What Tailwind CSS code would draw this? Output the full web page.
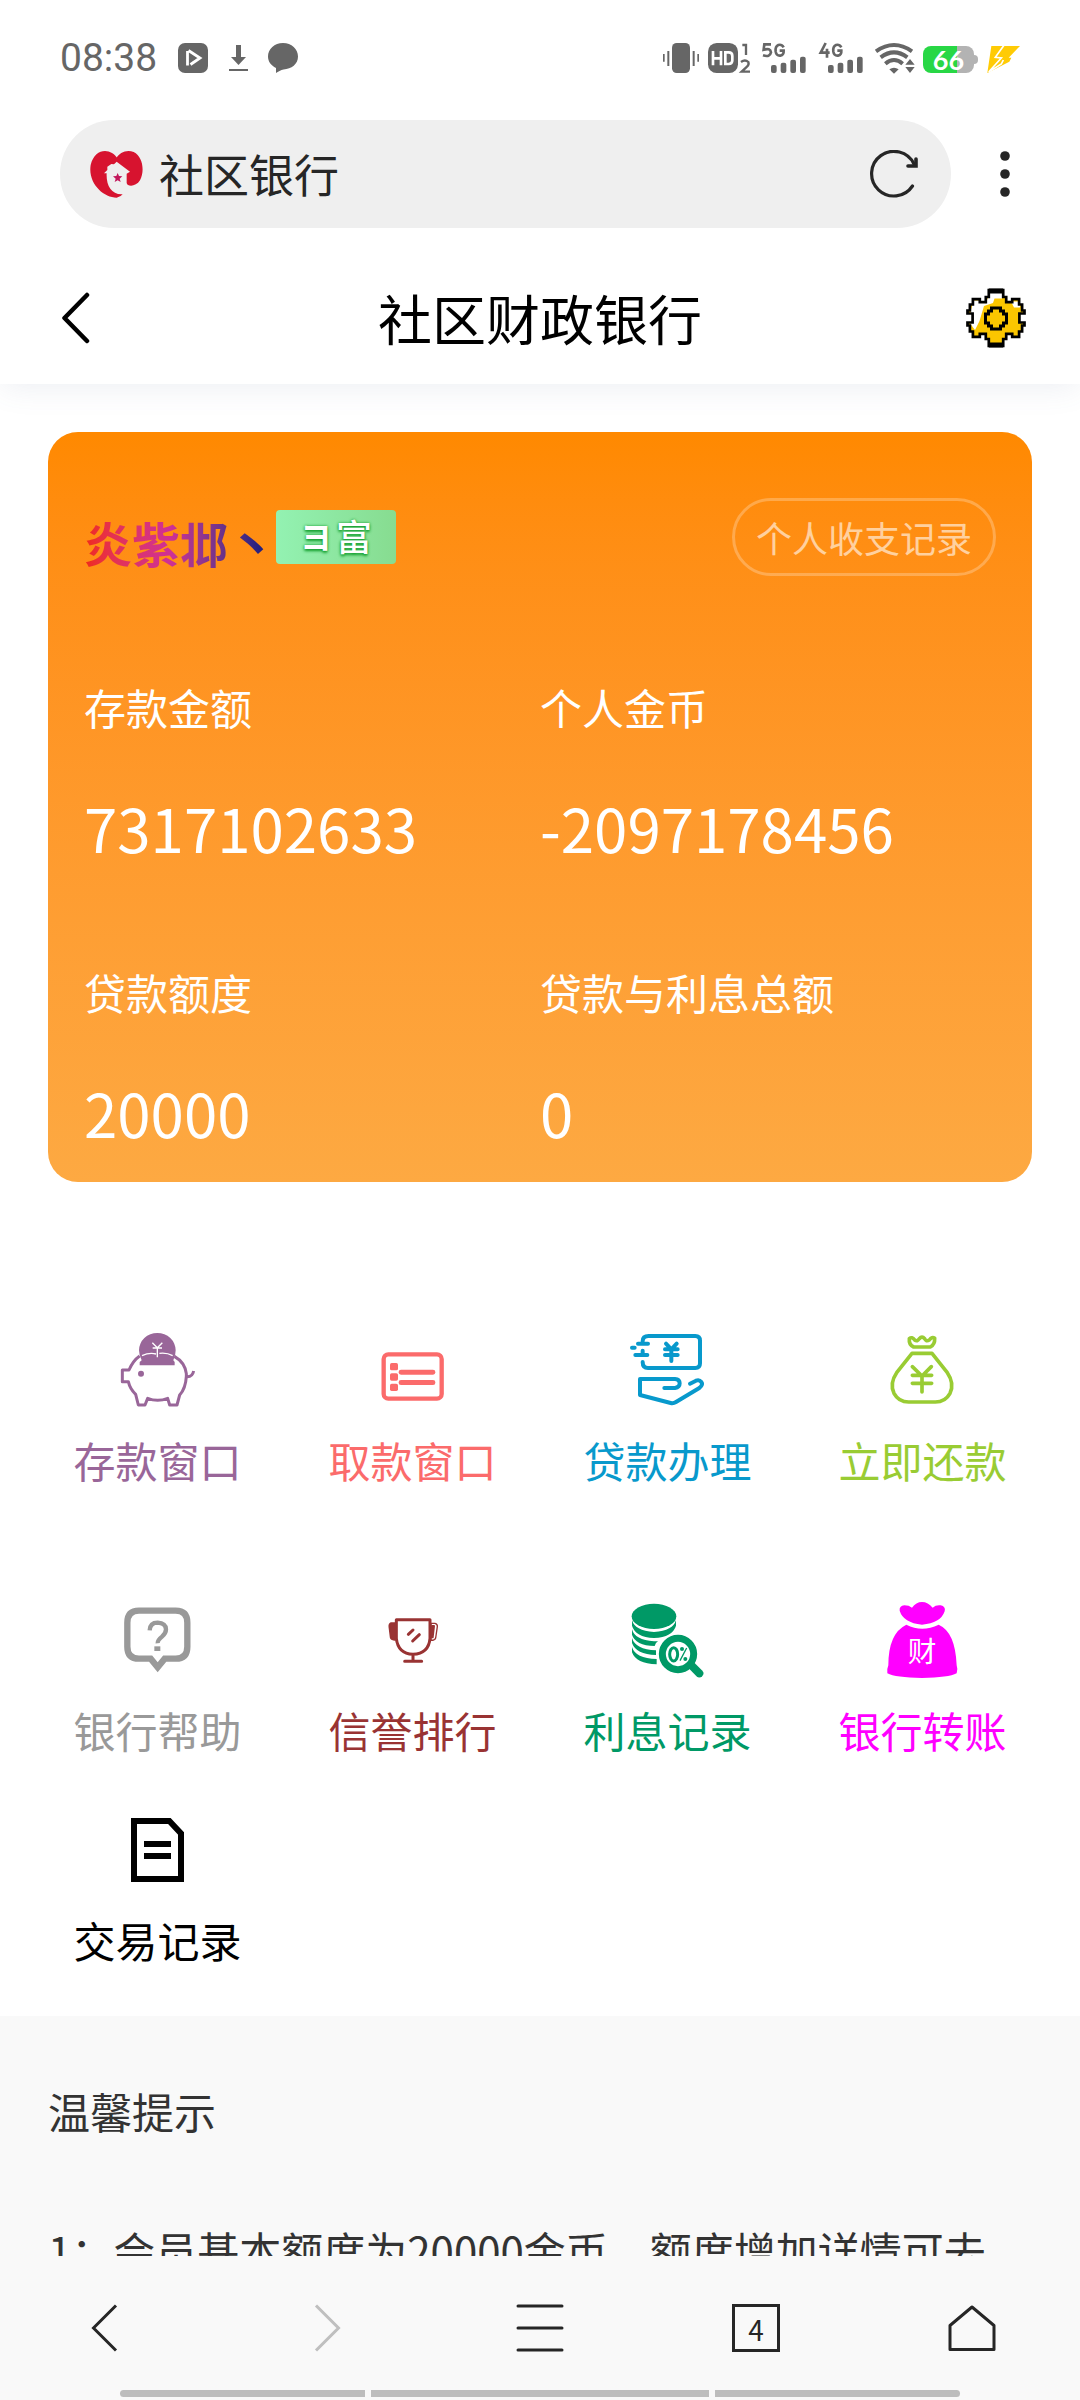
<!DOCTYPE html>
<html lang="zh-CN">
<head>
<meta charset="utf-8">
<meta name="viewport" content="width=device-width, initial-scale=1">
<title>社区财政银行</title>
<script src="https://cdn.jsdelivr.net/npm/@tailwindcss/browser@4"></script>
</head>
<body class="flex h-screen flex-col bg-white font-['Noto_Sans_CJK_SC',sans-serif] text-black">

<header class="relative z-10 shrink-0 bg-white shadow-[0_4px_30px_-2px_rgba(90,105,150,0.12)]">
  <!-- Status bar -->
  <div class="flex h-[120px] items-center justify-between px-[60px] pb-1 text-[#666]">
    <div class="flex items-center">
      <span class="w-[118px] font-['Roboto',sans-serif] text-[39px] leading-[44px]">08:38</span>
      <svg class="h-[30px] w-[30px]" viewBox="0 0 30 30" fill="none"><rect width="30" height="30" rx="7" fill="currentColor"/><path d="M9.500 8v14.500M10.500 7.500L22 15 12.500 21.500" stroke="#fff" stroke-width="2.800"/><path d="M12 11l6 4.200-6 4z" fill="currentColor"/></svg>
      <svg class="ml-[21px] h-[28px] w-[19px]" viewBox="0 0 19 28" fill="currentColor"><path d="M7 1h5v12h5l-7.500 8L2 13h5zM0 25h19v2H0z"/></svg>
      <svg class="ml-5 h-[30px] w-[30px]" viewBox="0 0 30 30" fill="currentColor"><path d="M15 0c8.500 0 15 6 15 13.500S23.500 26 15.500 26.500C13 27 10 28.500 8 30v-5C3 22.500 0 18.500 0 13.500 0 6 6.500 0 15 0z"/></svg>
    </div>
    <div class="flex items-center gap-2">
      <svg class="h-8 w-[39px]" viewBox="63 66 117 96" fill="currentColor"><rect x="96" y="69" width="54" height="90" rx="14"/><path d="M69 102h5v23h-5zM82 93h6v45h-6zM158 93h6v45h-6zM172 102h5v23h-5z"/></svg>
      <svg class="h-8 w-[46px]" viewBox="204 66 138 96" fill="currentColor"><rect x="204" y="69" width="90" height="90" rx="26"/><path d="M219 93v43M243 93v43M219 115h24M256 97h10q11 0 11 11v13q0 11-11 11h-10z" fill="none" stroke="#fff" stroke-width="8"/><path d="M307 75h11v30M303 126q12-9 22 0q3 8-4 14l-16 15h25" fill="none" stroke="currentColor" stroke-width="7"/></svg>
      <svg class="h-8 w-[46px]" viewBox="366 66 138 96" fill="currentColor"><path d="M393 73h-20l-2 16q20-6 22 8q-3 16-24 9M431 82q-6-10-16-7q-10 4-8 20q2 13 14 12q11-2 10-15h-12" fill="none" stroke="currentColor" stroke-width="8"/><rect x="393" y="135" width="17" height="24" rx="6"/><rect x="422" y="128" width="17" height="31" rx="6"/><rect x="451" y="119" width="17" height="40" rx="6"/><rect x="480" y="110" width="17" height="49" rx="6"/></svg>
      <svg class="h-8 w-[50px]" viewBox="528 66 150 96" fill="currentColor"><path d="M557 69l-15 29h27M561 86v27M604 82q-6-10-16-7q-10 4-8 20q2 13 14 12q11-2 10-15h-12" fill="none" stroke="currentColor" stroke-width="8"/><rect x="564" y="135" width="17" height="24" rx="6"/><rect x="593" y="128" width="17" height="31" rx="6"/><rect x="622" y="119" width="17" height="40" rx="6"/><rect x="651" y="110" width="17" height="49" rx="6"/></svg>
      <svg class="h-8 w-[41px]" viewBox="702 66 123 96"><g fill="none" stroke="currentColor" stroke-width="12"><path d="M708 94q54-38 108 0M722 112q40-30 80 0M736 131q26-22 52 0"/></g><path d="M748 148q14-10 28 0l-14 13zM796 134l14-17 14 17zM796 141h28l-14 18z" fill="currentColor"/></svg>
      <span class="flex items-center pt-[2px]">
        <span class="flex h-[27px] w-[51px] items-center justify-center rounded-lg bg-linear-to-r from-[#28d745] from-66% to-[#b3b3b3] to-66% font-['Lato',sans-serif] text-[27px] leading-[27px] font-bold text-white">66</span>
        <span class="h-[9px] w-1 rounded-r bg-[#b3b3b3]"></span>
      </span>
      <svg class="h-8 w-[34px]" viewBox="1038 66 102 96"><path d="M1054 78h86l-34 35h8l-6 12-66 34z" fill="#ffcb05"/><path d="M1092 76l-26 36 18 2-38 42M1046 156l38-24 6-12" fill="none" stroke="#fff" stroke-width="5"/></svg>
    </div>
  </div>

  <!-- Address bar -->
  <div class="flex h-[108px] items-stretch pr-[21px] pl-[60px]">
    <div class="flex min-w-0 flex-1 items-center rounded-full bg-[#efefef] pr-[33px] pl-[30px]">
      <svg class="h-12 w-[54px] shrink-0" viewBox="270 455 162 144"><path d="M352 480C335 450 285 445 272 500c-9 55 38 98 78 98q12-2 18-10c-34 2-50-28-48-63h-8l10-10v-10l12-8 8 1 8-8 40 30-10 6v28c2 12 28 12 40-8 14-26 10-70-19-85-20-9-43 1-53 20z" fill="#d7132f"/><path d="M353 524l4 9 10 1-8 7 3 10-9-5-9 5 3-10-8-7 10-1z" fill="#c2185b"/></svg>
      <span class="ml-[15px] min-w-0 flex-1 truncate text-[45px] leading-[66px] text-[#262626]">社区银行</span>
      <button type="button" aria-label="刷新" class="flex h-12 w-12 items-center justify-center text-[#262626]">
        <svg class="h-12 w-12" viewBox="0 0 48 48" fill="none" stroke="currentColor" stroke-width="3.200" stroke-linecap="round"><path d="M42.500 36A22.300 22.300 0 1 1 44 14"/><path d="M46 9v7h-8" stroke-width="3.600"/></svg>
      </button>
    </div>
    <button type="button" aria-label="更多" class="flex w-[108px] items-center justify-center text-[#262626]">
      <svg class="h-12 w-3" viewBox="0 0 12 48" fill="currentColor"><circle cx="6" cy="6" r="4.800"/><circle cx="6" cy="24" r="4.800"/><circle cx="6" cy="42" r="4.800"/></svg>
    </button>
  </div>

  <!-- Page title -->
  <div class="mt-6 grid h-[132px] grid-cols-[60px_1fr_60px] items-center px-[54px]">
    <a href="#" aria-label="返回" class="flex h-[60px] items-center pl-2">
      <svg class="h-[54px] w-[30px]" viewBox="0 0 30 54" fill="none" stroke="currentColor" stroke-width="4.500" stroke-linecap="round" stroke-linejoin="round"><path d="M25 4L2.500 27 25 50"/></svg>
    </a>
    <h1 class="text-center text-[54px] leading-[78px]">社区财政银行</h1>
    <a href="#" aria-label="设置" class="block">
      <svg class="h-[60px] w-[60px]" viewBox="0 0 20 20"><path d="M7.600.7h4.800V3h1v1.700h2V3.700h2.300v1.800h1v2h.8v1h-1.700v3h1.700v1h-.8v2h-1v1.800h-2.300v-1h-2V17h-1v2.300H7.600V17h-1v-1.700h-2v1H2.300v-1.800h-1v-2H.5v-1h1.700v-3H.5v-1h.8v-2h1V3.700h2.300v1h2V3h1z" fill="#fbc600"/><path d="M2.500 4.200h2l2 1 1.500-3.500h4v1.800H9.500L9 5l-3 1-1.500 5L3 14l-1.500-2V8zM15 4.500h3v2h-2z" fill="#fff"/><path d="M7.600.7h4.800V3h1v1.700h2V3.700h2.300v1.800h1v2h.8v1h-1.700v3h1.700v1h-.8v2h-1v1.800h-2.300v-1h-2V17h-1v2.300H7.600V17h-1v-1.700h-2v1H2.300v-1.800h-1v-2H.5v-1h1.700v-3H.5v-1h.8v-2h1V3.700h2.300v1h2V3h1z" fill="none" stroke="#000" stroke-width=".900"/><path d="M7.600.2h4.800v1.600H7.600zM7.600 18.200h4.800v1.600H7.600z"/><path d="M8.500 6.700h3v1h1v1h1v3h-1v1h-1v1h-3v-1h-1v-1h-1v-3h1v-1h1z" fill="#fbc600" stroke="#000" stroke-width="1"/></svg>
    </a>
  </div>
</header>

<main class="flex min-h-0 flex-1 flex-col overflow-y-auto pt-12 [scrollbar-width:none]">
  <!-- Account card -->
  <section class="mx-12 shrink-0 rounded-[30px] bg-linear-to-b from-[#ff8900] to-[#fda942] px-9 pt-[66px] pb-[25px] text-white">
    <div class="flex h-[78px] items-center justify-between">
      <div class="flex items-center">
        <span class="mt-[10px] bg-linear-to-r from-[#f02a10] via-[#cf2f95] via-45% to-[#00107a] bg-clip-text text-[48px] leading-[64px] font-bold text-transparent">炎紫邶丶</span>
        <span class="flex h-[54px] w-[120px] items-center justify-center gap-1 rounded bg-linear-to-r from-[#93f2b2] to-[#87dc90] pb-1 leading-[50px] font-bold text-white [text-shadow:0_0_3px_#16a030,0_2px_3px_#16a030]"><span class="text-[32px]">ヨ</span><span class="text-[36px] font-medium">富</span></span>
      </div>
      <a href="#" class="flex h-[78px] items-center rounded-full border-3 border-white/25 px-[21px] text-[36px] leading-[54px] text-white/60">个人收支记录</a>
    </div>
    <dl class="mt-[101px] grid grid-cols-2 gap-y-[90px]">
      <div><dt class="text-[42px] leading-[60px]">存款金额</dt><dd class="mt-[45px] text-[60px] leading-[90px]">7317102633</dd></div>
      <div><dt class="text-[42px] leading-[60px]">个人金币</dt><dd class="mt-[45px] text-[60px] leading-[90px]">-2097178456</dd></div>
      <div><dt class="text-[42px] leading-[60px]">贷款额度</dt><dd class="mt-[45px] text-[60px] leading-[90px]">20000</dd></div>
      <div><dt class="text-[42px] leading-[60px]">贷款与利息总额</dt><dd class="mt-[45px] text-[60px] leading-[90px]">0</dd></div>
    </dl>
  </section>

  <!-- Services -->
  <nav aria-label="银行服务" class="mt-[143px] shrink-0 px-[30px] pb-[46px] text-[42px] leading-[60px]">
    <div class="grid grid-cols-4 gap-y-[105px]">
      <a href="#" class="flex flex-col items-center gap-[15px] text-[#996699]">
        <svg class="h-[90px] w-[90px]" viewBox="159 75 270 270" fill="none" stroke="currentColor" stroke-width="9" stroke-linejoin="round"><path d="M239 168q-20 14-32 42h-20v35h18q5 22 22 38l8 32h20l8-20q30 12 60 0l6 20h22l8-30q18-20 20-56v-8q-4-34-36-52M379 230q18 2 22-17"/><path d="M239 196v-10l6-5q-8-16-8-30a55 52 0 0 1 110 0q0 16-7 30l4 5v10z" fill="currentColor" stroke="none"/><circle cx="243" cy="221" r="9" fill="currentColor" stroke="none"/><path d="M277 128l15 15 15-15M278 144h28M292 144v28M246 167q22-10 42-5M338 167q-18-10-40-7" stroke="#fff" stroke-width="4"/></svg>
        <span>存款窗口</span>
      </a>
      <a href="#" class="flex flex-col items-center gap-[15px] text-[#fb6b6b]">
        <svg class="h-[90px] w-[90px]" viewBox="924 75 270 270" fill="currentColor"><rect x="971" y="163" width="174" height="133" rx="14" fill="none" stroke="currentColor" stroke-width="13"/><rect x="990" y="189" width="24" height="22" rx="5"/><rect x="990" y="220" width="24" height="22" rx="5"/><rect x="990" y="251" width="24" height="22" rx="5"/><rect x="1016" y="209" width="110" height="15" rx="7"/><rect x="1016" y="240" width="110" height="15" rx="7"/></svg>
        <span>取款窗口</span>
      </a>
      <a href="#" class="flex flex-col items-center gap-[15px] text-[#0899cc]">
        <svg class="h-[90px] w-[90px]" viewBox="189 75 270 270" fill="none" stroke="currentColor" stroke-width="12" stroke-linecap="round" stroke-linejoin="round"><path d="M248 124q0-16 18-16h140q14 0 14 14v68q0 14-14 14H264q-16 0-16-18M234 131h30M216 143h8M248 152v12M226 165h36M318 131l16 17 16-17M315 148h38M315 165h38M334 150v33M313 264h32q14-2 14-14q0-12-14-13H240v48l92 24q8 2 16-3l70-42q12-10 6-18q-6-8-16-4l-18 9"/></svg>
        <span>贷款办理</span>
      </a>
      <a href="#" class="flex flex-col items-center gap-[15px] text-[#99cc33]">
        <svg class="h-[90px] w-[90px]" viewBox="955 75 270 270" fill="none" stroke="currentColor" stroke-width="11" stroke-linecap="round" stroke-linejoin="round"><path d="M1062 141h50q14-8 13-26q-8-6-16 5q-10 6-14-4q-8-9-16 0q-6 10-14 4q-8-11-16-4q-2 18 13 25zM1057 160h60l46 58q22 32 8 62q-14 26-44 26h-80q-30 0-44-26q-14-30 8-62zM1058 200l29 28 28-28M1058 226h58M1058 250h58M1087 228v48"/></svg>
        <span>立即还款</span>
      </a>
      <a href="#" class="flex flex-col items-center gap-[15px] text-[#999]">
        <svg class="h-[90px] w-[90px]" viewBox="159 75 270 270" fill="none" stroke="currentColor" stroke-width="19"><path d="M237 122h110q35 0 35 36v72q0 36-35 36h-33l-21 26-21-26h-35q-35 0-35-36v-72q0-36 35-36z"/><path d="M269 181q1-23 24-23q24 1 25 20q0 12-12 22q-14 11-13 20" stroke-width="13"/><path d="M283 229h18v14h-18z" fill="currentColor" stroke="none"/></svg>
        <span>银行帮助</span>
      </a>
      <a href="#" class="flex flex-col items-center gap-[15px] text-[#993333]">
        <svg class="h-[90px] w-[90px]" viewBox="924 75 270 270" fill="none" stroke="currentColor" stroke-width="9" stroke-linecap="round" stroke-linejoin="round"><path d="M1009 149h101v56q-4 46-51 48q-45-2-50-48zM1059 254v18M1034 274h51M1045 193l14-13M1058 213l20-19"/><path d="M1007 159h-14q-6 2-5 12l4 32q2 8 16 6z" fill="currentColor" stroke-width="5"/><path d="M1113 160h12q8 2 7 10l-5 34q-2 7-14 7z" stroke-width="4"/><path d="M1116 168h6l-4 34h-4z" stroke-width="6"/></svg>
        <span>信誉排行</span>
      </a>
      <a href="#" class="flex flex-col items-center gap-[15px] text-[#009966]">
        <svg class="h-[90px] w-[90px]" viewBox="189 75 270 270" fill="currentColor"><ellipse cx="282" cy="139" rx="67" ry="38"/><path d="M216 150q8 32 66 36 58-4 66-36v17q-10 34-66 37-56-3-66-37zM216 178q8 32 66 36h12q-10 6-10 14-58-2-68-34zM216 204q10 34 72 37v14q-60-2-72-36zM216 231q10 34 74 36v16q-62-2-74-36z"/><circle cx="354" cy="252" r="60" fill="#fff"/><circle cx="354" cy="252" r="47" fill="#fff" stroke="currentColor" stroke-width="21"/><path d="M396 288l22 22" stroke="currentColor" stroke-width="24" stroke-linecap="round"/><g fill="none" stroke="currentColor"><ellipse cx="341" cy="253" rx="12" ry="20" stroke-width="9"/><path d="M380 234l-20 38" stroke-width="4"/></g><circle cx="366" cy="237" r="6"/><circle cx="376" cy="267" r="6"/></svg>
        <span>利息记录</span>
      </a>
      <a href="#" class="flex flex-col items-center gap-[15px] text-[#ff00ff]">
        <svg class="h-[90px] w-[90px]" viewBox="955 75 270 270" fill="currentColor"><path d="M1057 113q12-17 30-17t32 17q10-9 24-7 16 4 12 18-12 36-68 40-56-6-67-42-2-14 14-16 14 0 23 7zM1040 164q47 24 97 0 50 22 54 122 4 10 0 24-24 13-104 14-80-1-104-14-2-12 3-24 0-96 54-122z"/><text x="1087" y="277" text-anchor="middle" font-size="86" font-family="'Noto Sans CJK SC', sans-serif" fill="#fff">财</text></svg>
        <span>银行转账</span>
      </a>
    </div>
    <div class="mt-[45px] grid grid-cols-4">
      <a href="#" class="flex flex-col items-center gap-[15px] text-black">
        <svg class="h-[90px] w-[90px]" viewBox="219 45 270 270" fill="none" stroke="currentColor" stroke-width="18"><path d="M282 93h106l35 37v137H282zM312 162h81M312 198h81"/></svg>
        <span>交易记录</span>
      </a>
    </div>
  </nav>

  <!-- Tips -->
  <section class="flex shrink-0 grow flex-col gap-[76px] bg-[#f9f9f9] px-12 pt-[63px] text-[42px] leading-[63px] text-[#333]">
    <h2>温馨提示</h2>
    <p>1：会员基本额度为20000金币，额度增加详情可去</p>
  </section>
</main>

<!-- Browser toolbar -->
<nav aria-label="浏览器工具栏" class="relative z-10 grid h-36 shrink-0 grid-cols-5 bg-[#f9f9f9] text-[#262626]">
  <button type="button" aria-label="后退" class="flex items-center justify-center"><svg class="h-12 w-12" viewBox="0 0 48 48" fill="none" stroke="currentColor" stroke-width="3"><path d="M32 1.500L9.500 24 32 46.500"/></svg></button>
  <button type="button" aria-label="前进" class="flex items-center justify-center text-[#bfbfbf]"><svg class="h-12 w-12" viewBox="0 0 48 48" fill="none" stroke="currentColor" stroke-width="3"><path d="M16 1.500L38.500 24 16 46.500"/></svg></button>
  <button type="button" aria-label="菜单" class="flex items-center justify-center"><svg class="h-12 w-12" viewBox="0 0 48 48" fill="none" stroke="currentColor" stroke-width="3"><path d="M2 2h44M2 24h44M2 46h44" stroke-linecap="round"/></svg></button>
  <button type="button" aria-label="标签页" class="flex items-center justify-center"><span class="flex h-12 w-12 items-center justify-center border-3 border-current pt-[2px] text-[28px] leading-[32px]">4</span></button>
  <button type="button" aria-label="主页" class="flex items-center justify-center"><svg class="h-12 w-12" viewBox="0 0 48 48" fill="none" stroke="currentColor" stroke-width="3" stroke-linejoin="round"><path d="M24 3L46 21.500V45.500H2V21.500z"/></svg></button>
  <div class="absolute inset-x-[120px] bottom-[3px] flex h-[7px] gap-[6px]">
    <span class="flex-[245] rounded-l-full bg-[#bdbdbd]"></span>
    <span class="flex-[338] bg-[#bdbdbd]"></span>
    <span class="flex-[245] rounded-r-full bg-[#bdbdbd]"></span>
  </div>
</nav>
</body>
</html>
